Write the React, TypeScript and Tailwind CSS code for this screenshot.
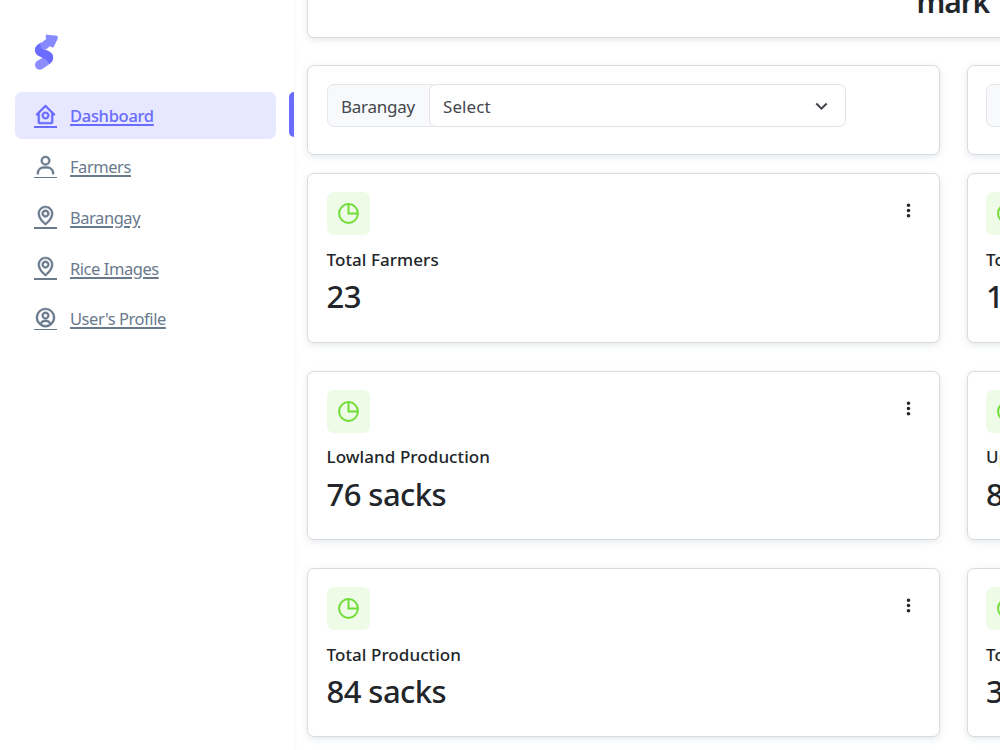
import { BiDotsVerticalRounded, BiHomeCircle, BiMap, BiUser, BiUserCircle, BiChevronDown } from 'react-icons/bi';
import type { IconType } from 'react-icons';
import clsx from 'clsx';

interface MenuItem {
  label: string;
  icon: IconType;
  active?: boolean;
}

const menu: MenuItem[] = [
  { label: 'Dashboard', icon: BiHomeCircle, active: true },
  { label: 'Farmers', icon: BiUser },
  { label: 'Barangay', icon: BiMap },
  { label: 'Rice Images', icon: BiMap },
  { label: "User's Profile", icon: BiUserCircle },
];

const stats = [
  { title: 'Total Farmers', value: '23' },
  { title: 'Total Area', value: '15' },
  { title: 'Lowland Production', value: '76 sacks' },
  { title: 'Upland Production', value: '8 sacks' },
  { title: 'Total Production', value: '84 sacks' },
  { title: 'Total Rice', value: '3' },
];

const cardClass = 'rounded-[7px] border border-[#d9dbdf] bg-white shadow-[0_2px_7px_rgba(67,89,113,0.14)]';

function Logo() {
  return (
    <svg width="25" height="38" viewBox="100 40 75 114">
      <path d="M134 110L110 123C102 128 101 140 107 146C112 151 120 151 126 147L148 132C154 126 157 118 156 110Z" fill="#8c8dff" />
      <path d="M122 68C106 76 99 87 104 98C107 107 113 110 125 114C135 118 139 120 141 126L147 132C158 125 160 112 155 103C150 95 140 92 133 90C123 86 118 80 122 68Z" fill="#696cff" />
      <path d="M118 72L136 59L135 46Q137 44 140 45L169 48Q173 50 171 57L159 82Q157 85 154 83L148 80L135 90Q118 85 118 72Z" fill="#8789ff" />
    </svg>
  );
}

function PieIcon() {
  return (
    <svg width="21" height="21" viewBox="0 0 21 21" fill="none" stroke="currentColor" strokeWidth="2">
      <circle cx="10.5" cy="10.5" r="9.4" />
      <path d="M10.5 1v9.5H20" />
    </svg>
  );
}

function Sidebar() {
  return (
    <aside className="relative h-full w-[294px] shrink-0 bg-white pt-[33px] shadow-[0_0_5px_rgba(67,89,113,0.06)]">
      <a className="ml-[33.5px] block h-[59px]"><Logo /></a>
      <ul className="flex flex-col gap-[3.7px]">
        {menu.map(({ label, icon: Icon, active }) => (
          <li key={label} className="relative px-[15px]">
            <a
              className={clsx(
                'flex h-[47px] w-[260.5px] items-center rounded-[7px] pl-[19px]',
                active ? 'bg-[#e7e7ff] text-[#696cff]' : 'text-[#697a8d]'
              )}
            >
              <span className="mr-[13px] w-[23px] pb-[0.5px]">
                <Icon size={23} strokeWidth={0.4} />
                <span className="block h-[1.5px] bg-current" />
              </span>
              <span
                className={clsx(
                  'text-[16.5px] leading-6 underline decoration-[1.5px] underline-offset-2',
                  active ? 'mt-px font-medium tracking-[-0.3px]' : 'mt-0.5 tracking-[-0.45px]'
                )}
              >
                {label}
              </span>
            </a>
            {active && <span className="absolute top-0 right-0 h-[45px] w-[5px] rounded-l-[5px] bg-[#696cff]" />}
          </li>
        ))}
      </ul>
    </aside>
  );
}

function BarangayFilter() {
  return (
    <div className={clsx(cardClass, 'h-[90px] px-[18.5px] pt-[18px]')}>
      <div className="flex h-[43px] w-[519.5px] text-[17px] text-[#43474c]">
        <span className="flex w-[106px] shrink-0 items-center rounded-l-[7px] border border-[#e4e6ea] bg-[#f8f9fb] pt-0.5 pl-[13.5px] tracking-[-0.25px]">
          Barangay
        </span>
        <button className="-ml-1 flex flex-1 items-center justify-between rounded-[7px] border border-[#e1e3e7] bg-white pr-[11px] pl-[13.5px]">
          <span className="pt-0.5 tracking-[0.1px]">Select</span>
          <BiChevronDown size={25} />
        </button>
      </div>
    </div>
  );
}

function StatCard({ title, value }: { title: string; value: string }) {
  return (
    <div className={clsx(cardClass, 'h-[169.4px] px-[18.5px] pt-[18px]')}>
      <div className="flex items-start justify-between">
        <div className="flex size-[43px] items-center justify-center rounded-[7px] bg-[#edfbe7] text-[#71dd37]">
          <PieIcon />
        </div>
        <BiDotsVerticalRounded className="mt-2 mr-[1.5px]" size={21} />
      </div>
      <p className="mt-[11.5px] text-[17px] leading-[25px] font-medium tracking-[0.08px] whitespace-nowrap">{title}</p>
      <h3 className="mt-[5.5px] text-[31px] leading-[38px] font-medium tracking-[-0.55px] whitespace-nowrap">{value}</h3>
    </div>
  );
}

export default function App() {
  return (
    <div className="flex h-[750px] w-[1000px] overflow-hidden bg-white font-['Noto_Sans',sans-serif] text-[#22262a]">
      <Sidebar />
      <main className="h-full flex-1 overflow-hidden pl-[13px]">
        <div className={clsx(cardClass, '-mt-[42px] h-[80px] w-[1293px]')}>
          <h2 className="mt-[23px] ml-[608.5px] text-[30px] leading-[40px] font-semibold tracking-[-1.1px]">mark</h2>
        </div>
        <div className="mt-[27px] grid grid-cols-[633px_633px] gap-x-[26.6px]">
          <BarangayFilter />
          <BarangayFilter />
        </div>
        <div className="mt-[18.3px] grid grid-cols-[633px_633px] gap-x-[26.6px] gap-y-[28px]">
          {stats.map((stat) => (
            <StatCard key={stat.title} {...stat} />
          ))}
        </div>
      </main>
    </div>
  );
}
